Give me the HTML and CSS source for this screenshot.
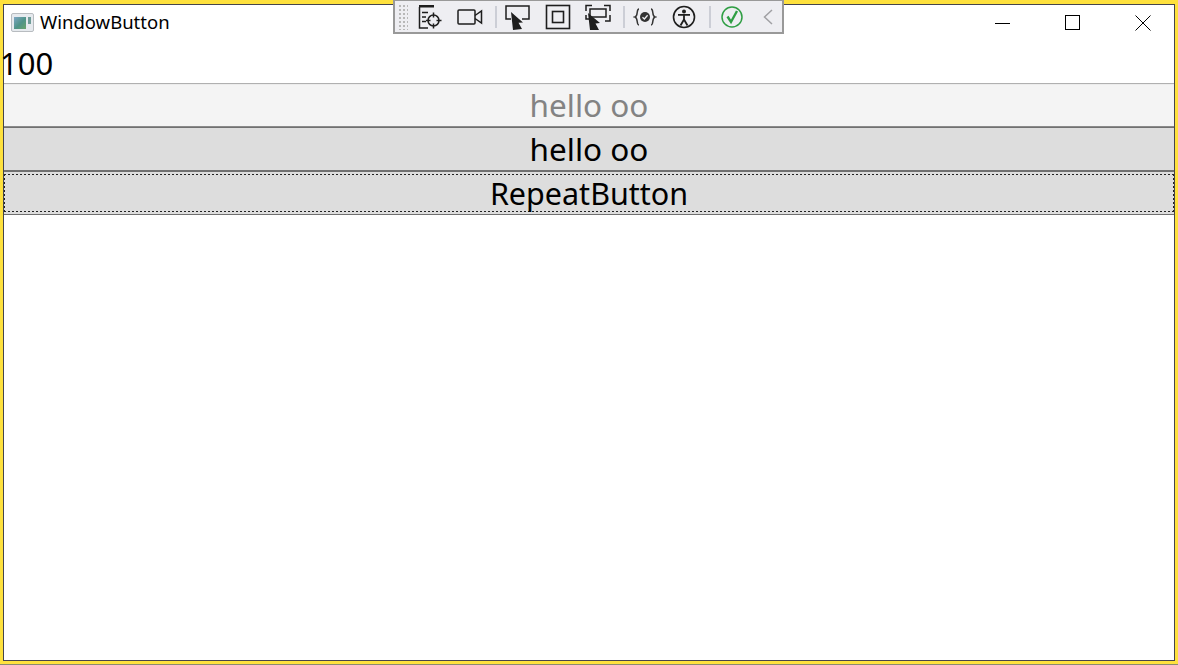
FILE: index.html
```html
<!DOCTYPE html>
<html lang="en">
<head>
<meta charset="utf-8">
<title>WindowButton</title>
<link rel="stylesheet" href="styles.css">
</head>
<body>
<div class="frame">
  <div class="client">
    <header class="titlebar">
      <svg class="app-icon" width="23" height="19" viewBox="0 0 23 19">
        <defs><linearGradient id="pane" x1="0" y1="0" x2="1" y2="1"><stop offset="0" stop-color="#7fa6c4"/><stop offset="0.55" stop-color="#4f9488"/><stop offset="1" stop-color="#6aa56c"/></linearGradient></defs>
        <rect x="0.5" y="0.5" width="22" height="18" rx="1.5" fill="#e6eaee" stroke="#b8bcc0"/>
        <rect x="3" y="4" width="12" height="12" fill="url(#pane)"/>
        <rect x="17" y="4" width="3" height="7" fill="#6f9c98"/>
      </svg>
      <span class="title">WindowButton</span>
      <div class="caption">
        <span class="cap-btn"><svg width="16" height="16" viewBox="0 0 16 16"><path d="M0 8.5H15" stroke="#000"/></svg></span>
        <span class="cap-btn"><svg width="16" height="16" viewBox="0 0 16 16"><rect x="0.5" y="0.5" width="14" height="14" fill="none" stroke="#000"/></svg></span>
        <span class="cap-btn"><svg width="16" height="16" viewBox="0 0 16 16"><path d="M0.5 0.5L15.5 15.5M15.5 0.5L0.5 15.5" stroke="#000" fill="none"/></svg></span>
      </div>
    </header>
    <div class="count">100</div>
    <div class="buttons">
      <button class="btn btn-disabled" type="button">hello oo</button>
      <button class="btn" type="button">hello oo</button>
      <button class="btn btn-focus" type="button"><span class="focus-ring">RepeatButton</span></button>
    </div>
  </div>
  <nav class="toolbar">
    <span class="grip"></span>
    <svg class="tb-icon" width="26" height="26" viewBox="0 0 26 26"><path d="M2 1H17V3.500H2Z" fill="#1e1e1e"/><path d="M2.500 3V24H11M5 8.500H11M5 13H9M5 17.500H9" fill="none" stroke="#1e1e1e" stroke-width="1.500"/><circle cx="16.500" cy="16.500" r="5.500" fill="none" stroke="#1e1e1e" stroke-width="1.500"/><path d="M16.500 8.500V13.500M16.500 19.500V24.500M9 16.500H13.500M19.500 16.500H24.500" stroke="#1e1e1e" stroke-width="1.500"/></svg>
    <svg class="tb-icon" width="26" height="26" viewBox="0 0 26 26"><rect x="1" y="6" width="17" height="14" rx="1" fill="none" stroke="#1e1e1e" stroke-width="1.500"/><path d="M18 11.500L24.500 7V19L18 14.500" fill="none" stroke="#1e1e1e" stroke-width="1.500"/></svg>
    <span class="sep"></span>
    <svg class="tb-icon" width="26" height="26" viewBox="0 0 26 26"><path d="M6 15H1V2H24V15H17" fill="none" stroke="#1e1e1e" stroke-width="1.500"/><path d="M6 8L18 18.500L13.500 18.800L17 25L8 26Z" fill="#1e1e1e"/></svg>
    <svg class="tb-icon" width="26" height="26" viewBox="0 0 26 26"><rect x="1.500" y="1.500" width="23" height="23" fill="none" stroke="#1e1e1e" stroke-width="1.600"/><rect x="7.500" y="7.500" width="11" height="11" fill="none" stroke="#1e1e1e" stroke-width="1.600"/></svg>
    <svg class="tb-icon" width="26" height="26" viewBox="0 0 26 26"><path d="M1 7V1.500H7M19 1.500H25V7M25 11V17H20M1 11V15H4" fill="none" stroke="#1e1e1e" stroke-width="1.500"/><rect x="5" y="5" width="16" height="8" fill="none" stroke="#1e1e1e" stroke-width="1.500"/><path d="M3 9L15 19L10.500 19.500L14 26L5 26Z" fill="#1e1e1e"/></svg>
    <span class="sep"></span>
    <svg class="tb-icon" width="24" height="24" viewBox="0 0 24 24"><path d="M6 4C3 4 5.500 11 2 12C5.500 13 3 20 6 20M18 4C21 4 18.500 11 22 12C18.500 13 21 20 18 20" fill="none" stroke="#333" stroke-width="1.500"/><circle cx="12" cy="12" r="5" fill="#333"/><path d="M9.500 12.200L11.400 14L14.600 10.300" fill="none" stroke="#eeeef2" stroke-width="1.300"/></svg>
    <svg class="tb-icon" width="26" height="26" viewBox="0 0 26 26"><circle cx="13" cy="13" r="10.500" fill="none" stroke="#1e1e1e" stroke-width="1.600"/><circle cx="13" cy="7.500" r="2" fill="#1e1e1e"/><path d="M7 10.800H19M13 10.800V15.500M13 15.500L9.500 21.500M13 15.500L16.500 21.500" fill="none" stroke="#1e1e1e" stroke-width="1.800"/></svg>
    <span class="sep"></span>
    <svg class="tb-icon" width="26" height="26" viewBox="0 0 26 26"><circle cx="13" cy="13" r="10" fill="none" stroke="#2f9e44" stroke-width="1.500"/><path d="M8.500 12.500L12 18L18 7" fill="none" stroke="#2f9e44" stroke-width="2.400"/></svg>
    <svg class="tb-icon tb-collapse" width="22" height="26" viewBox="0 0 22 26"><path d="M15 6L7.500 13L15 20" fill="none" stroke="#a0a0a4" stroke-width="1.500"/></svg>
  </nav>
</div>
</body>
</html>
```
FILE: styles.css
```css
* {
  box-sizing: border-box;
}

html,
body {
  margin: 0;
  height: 100%;
  overflow: hidden;
  background: #ffe040;
}

body {
  font-family: "Noto Sans", "Open Sans", sans-serif;
  color: #000;
}

.frame {
  position: relative;
  height: 665px;
  padding: 4px 3px 3px;
  background: #fee13d;
  border-bottom: 1px solid #8a8a70;
}

.client {
  height: 100%;
  border: 1px solid #45454c;
  background: #fff;
  display: flex;
  flex-direction: column;
}

.titlebar {
  height: 35px;
  display: flex;
  align-items: center;
  padding-left: 7px;
  flex: none;
}

.app-icon {
  flex: none;
}

.title {
  font-size: 18.500px;
  margin: 0 0 2px 6px;
}

.caption {
  margin-left: auto;
  display: flex;
  height: 100%;
  padding-right: 23px;
  gap: 54px;
  align-items: center;
}

.cap-btn {
  display: flex;
  width: 16px;
  height: 16px;
}

.count {
  flex: none;
  height: 44px;
  text-indent: -4px;
  font-size: 31px;
  line-height: 47px;
  border-bottom: 1px solid #b0b0b0;
}

.buttons {
  display: flex;
  flex-direction: column;
}

.btn {
  display: block;
  width: 100%;
  height: 44px;
  padding: 0;
  border: 1px solid #707070;
  border-left: 0;
  border-right: 0;
  background: #ddd;
  font: inherit;
  font-size: 31.500px;
  line-height: 42px;
  color: #000;
  text-align: center;
}

.btn-disabled {
  height: 43px;
  padding-bottom: 2px;
  line-height: 39px;
  border-top: 1px solid #ececec;
  border-bottom-color: #8a8a8a;
  background: #f4f4f4;
  color: #838383;
}

.btn-focus {
  padding: 2px 0;
  font-size: 30.500px;
}

.focus-ring {
  display: block;
  height: 100%;
  line-height: 38px;
  background-image:
    linear-gradient(90deg, #222 50%, transparent 50%),
    linear-gradient(90deg, #222 50%, transparent 50%),
    linear-gradient(#222 50%, transparent 50%),
    linear-gradient(#222 50%, transparent 50%);
  background-size: 4px 1px, 4px 1px, 1px 4px, 1px 4px;
  background-position: 0 0, 0 100%, 0 0, 100% 0;
  background-repeat: repeat-x, repeat-x, repeat-y, repeat-y;
}

.toolbar {
  position: absolute;
  top: 0;
  left: 393px;
  width: 391px;
  height: 34px;
  display: flex;
  align-items: center;
  gap: 14px;
  padding: 0 6px 0 3px;
  background: #eeeef2;
  border: 2px solid #999;
  border-top-width: 1px;
}

.grip {
  width: 10px;
  height: 26px;
  flex: none;
  margin-right: -5px;
  background-image: radial-gradient(#b8b8b8 1px, transparent 1.200px);
  background-size: 4px 4px;
}

.tb-icon {
  flex: none;
}

.tb-collapse {
  margin-left: -2px;
}

.sep {
  width: 2px;
  height: 22px;
  flex: none;
  margin: 0 -6px 0 -2px;
  background: #ccced6;
}
```
